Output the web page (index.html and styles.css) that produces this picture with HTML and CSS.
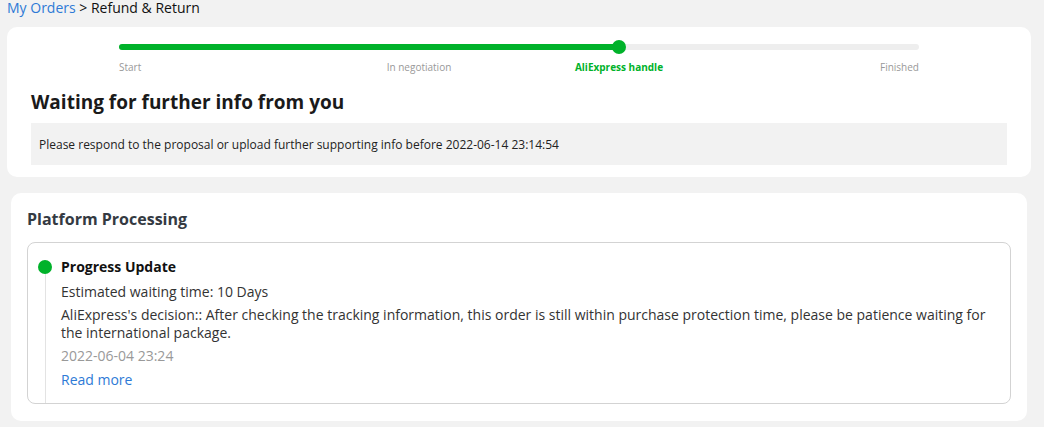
FILE: index.html
```html
<!DOCTYPE html>
<html>
<head>
<meta charset="utf-8">
<link rel="stylesheet" href="styles.css">
</head>
<body>
<div class="breadcrumb"><a class="crumb-link">My Orders</a> &gt; Refund &amp; Return</div>

<section class="card status-card">
  <div class="steps">
    <div class="track">
      <div class="track-fill" style="width:62.5%"></div>
      <div class="track-dot" style="left:62.5%"></div>
    </div>
    <div class="step-labels">
      <span class="step step-first">Start</span>
      <span class="step">In negotiation</span>
      <span class="step step-active">AliExpress handle</span>
      <span class="step step-last">Finished</span>
    </div>
  </div>
  <h1 class="status-title">Waiting for further info from you</h1>
  <div class="notice">Please respond to the proposal or upload further supporting info before 2022-06-14 23:14:54</div>
</section>

<section class="card process-card">
  <h2 class="process-title">Platform Processing</h2>
  <div class="timeline">
    <div class="tl-rail">
      <span class="tl-dot"></span>
      <span class="tl-line"></span>
    </div>
    <div class="tl-body">
      <div class="tl-title">Progress Update</div>
      <p class="tl-text tl-est">Estimated waiting time: 10 Days</p>
      <p class="tl-text tl-desc">AliExpress's decision:: After checking the tracking information, this order is still within purchase protection time, please be patience waiting for the international package.</p>
      <p class="tl-text tl-date">2022-06-04 23:24</p>
      <a class="tl-more">Read more</a>
    </div>
  </div>
</section>
</body>
</html>
```

FILE: styles.css
```css
* { box-sizing: border-box; }
html, body { margin: 0; padding: 0; }
body {
  background: #f2f2f2;
  font-family: "Open Sans", "Liberation Sans", sans-serif;
  color: #222;
  width: 1044px;
  height: 427px;
  overflow: hidden;
}
.breadcrumb {
  font-size: 14px;
  line-height: 15px;
  padding-left: 7px;
  color: #111;
  height: 27px;
}
.crumb-link { color: #2e7ad6; }

.card {
  background: #fff;
  border-radius: 10px;
}
.status-card {
  margin: 0 13px 0 7px;
  padding: 17px 24px 12px;
}
.steps { padding: 0 88px; }
.track {
  position: relative;
  height: 6px;
  background: #eeeeee;
  border-radius: 3px;
}
.track-fill {
  height: 6px;
  background: #00b22a;
  border-radius: 3px;
}
.track-dot {
  position: absolute;
  top: -4px;
  width: 14px;
  height: 14px;
  margin-left: -7px;
  border-radius: 50%;
  background: #00b22a;
}
.step-labels {
  display: grid;
  grid-template-columns: repeat(4, 1fr);
  margin-top: 10px;
  font-size: 10px;
  line-height: 14px;
  color: #999;
}
.step { text-align: center; }
.step-first { text-align: left; }
.step-last { text-align: right; }
.step-active { color: #00b22a; font-weight: 700; }

.status-title {
  margin: 16px 0 0;
  font-size: 19px;
  line-height: 24px;
  font-weight: 700;
  color: #1a1a1a;
}
.notice {
  margin-top: 9px;
  background: #f2f2f2;
  height: 42px;
  padding: 0 8px;
  display: flex;
  align-items: center;
  font-size: 12px;
  color: #222;
}

.process-card {
  margin: 16px 17px 0 11px;
  padding: 16px 16px 17px;
}
.process-title {
  margin: 0;
  font-size: 16px;
  line-height: 20px;
  font-weight: 700;
  color: #343a42;
}
.timeline {
  margin-top: 13px;
  border: 1px solid #d3d3d3;
  border-radius: 8px;
  display: flex;
  min-height: 162px;
}
.tl-rail {
  width: 33px;
  display: flex;
  flex-direction: column;
  align-items: center;
  padding-top: 17px;
  padding-left: 1px;
}
.tl-dot {
  width: 14px;
  height: 14px;
  border-radius: 50%;
  background: #00b22a;
  flex: none;
}
.tl-line {
  flex: 1;
  width: 1px;
  background: #e3e3e3;
}
.tl-body {
  flex: 1;
  padding: 14px 20px 14px 0;
}
.tl-title {
  font-size: 14px;
  line-height: 20px;
  font-weight: 700;
  color: #111;
}
.tl-text {
  margin: 0;
  font-size: 14px;
  line-height: 18px;
  color: #333;
}
.tl-est { margin-top: 6px; }
.tl-desc { margin-top: 5px; }
.tl-date { margin-top: 5px; color: #999; }
.tl-more {
  display: block;
  margin-top: 6px;
  font-size: 14px;
  line-height: 18px;
  color: #2e7ad6;
}
```
